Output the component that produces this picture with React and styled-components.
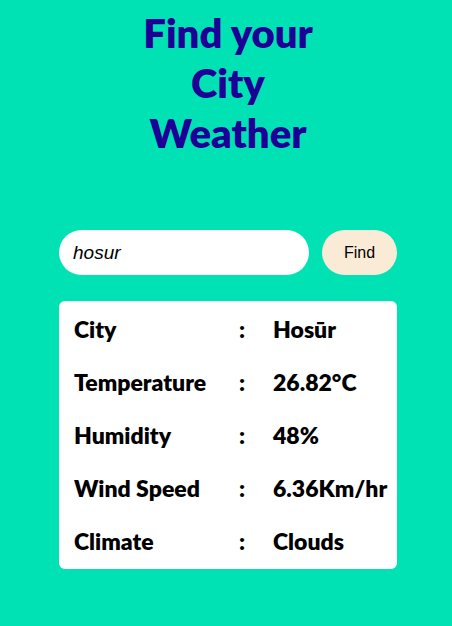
import styled, { createGlobalStyle } from "styled-components"

const GlobalStyle = createGlobalStyle`
    body {
        margin: 0;
        background-color: #00e2b4;
        font-family: "Lato", "Open Sans", sans-serif;
    }
`

const Page = styled.div`
    display: flex;
    flex-direction: column;
    align-items: center;
    padding: 8px 0 0 4px;
    min-height: 626px;
    box-sizing: border-box;
`

const Title = styled.h1`
    margin: 0;
    width: 230px;
    text-align: center;
    color: #1d0095;
    font-size: 40px;
    font-weight: 800;
    line-height: 50px;
`

const SearchRow = styled.div`
    display: flex;
    gap: 13px;
    margin-top: 72px;
    width: 338px;
`

const CityInput = styled.input`
    flex: 1;
    min-width: 0;
    height: 45px;
    border: none;
    border-radius: 23px;
    padding: 0 14px;
    font-family: "Liberation Sans", Arial, sans-serif;
    font-size: 19px;
    font-style: italic;
    color: #000;
    outline: none;
`

const FindButton = styled.button`
    flex-shrink: 0;
    width: 75px;
    height: 45px;
    border: none;
    border-radius: 23px;
    background-color: #faebd7;
    font-family: "Liberation Sans", Arial, sans-serif;
    font-size: 16px;
    color: #000;
    cursor: pointer;
`

const Card = styled.div`
    margin-top: 26px;
    width: 338px;
    background: #fff;
    border-radius: 6px;
    padding: 1px 0 2px;
    box-sizing: border-box;
`

const Row = styled.div`
    display: grid;
    grid-template-columns: 165px 34px auto;
    align-items: center;
    height: 53px;
    padding-left: 15px;
    font-size: 23px;
    font-weight: 800;
    color: #000;
`

const rows = [
    ["City", "Hosūr"],
    ["Temperature", "26.82°C"],
    ["Humidity", "48%"],
    ["Wind Speed", "6.36Km/hr"],
    ["Climate", "Clouds"],
]

const App = () => {
    return (
        <>
            <GlobalStyle />
            <Page>
                <Title>Find your City Weather</Title>
                <SearchRow>
                    <CityInput defaultValue="hosur" />
                    <FindButton>Find</FindButton>
                </SearchRow>
                <Card>
                    {rows.map(([label, value]) => (
                        <Row key={label}>
                            <span>{label}</span>
                            <span>:</span>
                            <span>{value}</span>
                        </Row>
                    ))}
                </Card>
            </Page>
        </>
    )
}

export default App
